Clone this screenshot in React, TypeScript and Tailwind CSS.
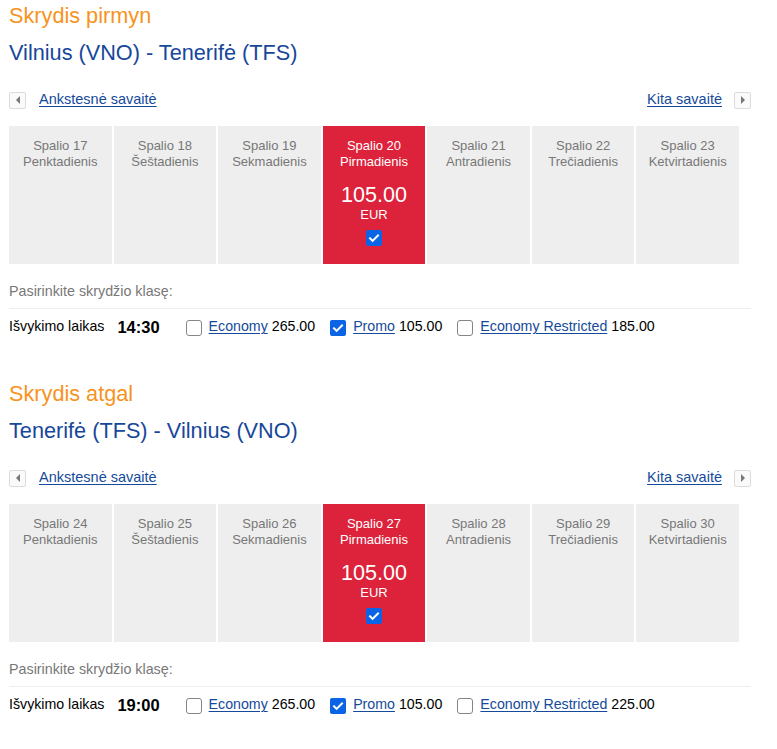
import React from 'react';

type Day = { date: string; name: string; selected?: boolean };

type Fare = { label: string; price: string; checked?: boolean };

type Leg = {
  title: string;
  route: string;
  days: Day[];
  time: string;
  fares: Fare[];
};

const legs: Leg[] = [
  {
    title: 'Skrydis pirmyn',
    route: 'Vilnius (VNO) - Tenerifė (TFS)',
    days: [
      { date: 'Spalio 17', name: 'Penktadienis' },
      { date: 'Spalio 18', name: 'Šeštadienis' },
      { date: 'Spalio 19', name: 'Sekmadienis' },
      { date: 'Spalio 20', name: 'Pirmadienis', selected: true },
      { date: 'Spalio 21', name: 'Antradienis' },
      { date: 'Spalio 22', name: 'Trečiadienis' },
      { date: 'Spalio 23', name: 'Ketvirtadienis' },
    ],
    time: '14:30',
    fares: [
      { label: 'Economy', price: '265.00' },
      { label: 'Promo', price: '105.00', checked: true },
      { label: 'Economy Restricted', price: '185.00' },
    ],
  },
  {
    title: 'Skrydis atgal',
    route: 'Tenerifė (TFS) - Vilnius (VNO)',
    days: [
      { date: 'Spalio 24', name: 'Penktadienis' },
      { date: 'Spalio 25', name: 'Šeštadienis' },
      { date: 'Spalio 26', name: 'Sekmadienis' },
      { date: 'Spalio 27', name: 'Pirmadienis', selected: true },
      { date: 'Spalio 28', name: 'Antradienis' },
      { date: 'Spalio 29', name: 'Trečiadienis' },
      { date: 'Spalio 30', name: 'Ketvirtadienis' },
    ],
    time: '19:00',
    fares: [
      { label: 'Economy', price: '265.00' },
      { label: 'Promo', price: '105.00', checked: true },
      { label: 'Economy Restricted', price: '225.00' },
    ],
  },
];

function Checkbox({ checked }: { checked?: boolean }) {
  if (checked) {
    return (
      <span className="flex h-[16px] w-[16px] shrink-0 items-center justify-center rounded-[2px] bg-[#0b63e5]">
        <svg width="12" height="12" viewBox="0 0 12 12" fill="none">
          <path d="M2 6.3l2.6 2.6L10 3.4" stroke="white" strokeWidth="2" strokeLinecap="square" />
        </svg>
      </span>
    );
  }
  return <span className="block h-[16px] w-[16px] shrink-0 rounded-[3px] border border-[#858585] bg-white" />;
}

function ArrowBox({ dir }: { dir: 'left' | 'right' }) {
  return (
    <span className="flex h-[17px] w-[17px] items-center justify-center rounded-[2px] border border-[#dcdcdc] bg-[#fafafa]">
      <svg width="6" height="8" viewBox="0 0 6 8">
        {dir === 'left' ? <path d="M5 0v8L1 4z" fill="#777" /> : <path d="M1 0v8l4-4z" fill="#777" />}
      </svg>
    </span>
  );
}

function LegSection({ leg, first }: { leg: Leg; first?: boolean }) {
  return (
    <section className={first ? 'pt-[4px]' : 'mt-[43px]'}>
      <h2 className="text-[21.7px] leading-[24px] text-[#f7931d]">{leg.title}</h2>
      <h3 className="mt-[13px] text-[21.7px] leading-[24px] text-[#17479a]">{leg.route}</h3>

      {/* week navigation */}
      <div className="mt-[27px] flex h-[16px] items-center justify-between text-[14.5px] text-[#154a9b]">
        <div className="flex items-center gap-[13px]">
          <ArrowBox dir="left" />
          <a href="#" className="underline underline-offset-[2px]">Ankstesnė savaitė</a>
        </div>
        <div className="flex items-center gap-[12px]">
          <a href="#" className="underline underline-offset-[2px]">Kita savaitė</a>
          <ArrowBox dir="right" />
        </div>
      </div>

      {/* days */}
      <div className="mt-[18px] grid h-[138px] w-[730px] grid-cols-7 gap-[2px]">
        {leg.days.map((d) =>
          d.selected ? (
            <div key={d.date} className="flex flex-col items-center bg-[#dc233b] pt-[12px] text-center text-white">
              <div className="text-[13px] leading-[16px]">{d.date}</div>
              <div className="text-[13px] leading-[16px]">{d.name}</div>
              <div className="mt-[13px] text-[21.5px] leading-[24px]">105.00</div>
              <div className="text-[13px] leading-[16px]">EUR</div>
              <div className="mt-[7px]">
                <Checkbox checked />
              </div>
            </div>
          ) : (
            <div key={d.date} className="bg-[#eeeeee] pt-[12px] text-center text-[#777777]">
              <div className="text-[13px] leading-[16px]">{d.date}</div>
              <div className="text-[13px] leading-[16px]">{d.name}</div>
            </div>
          )
        )}
      </div>

      <p className="mt-[17px] text-[14.3px] leading-[20px] text-[#777777]">Pasirinkite skrydžio klasę:</p>
      <div className="mt-[7px] border-t border-[#eeeeee]" />

      {/* fare row */}
      <div className="mt-[6px] flex h-[24px] items-center text-[14.2px] text-black">
        <span>Išvykimo laikas</span>
        <span className="ml-[13px] text-[16.5px] font-bold">{leg.time}</span>
        <div className="ml-[26px] flex items-center gap-[15px]">
          {leg.fares.map((f) => (
            <label key={f.label} className="flex items-center">
              <span className="mt-[3px]">
                <Checkbox checked={f.checked} />
              </span>
              <a href="#" className="ml-[7px] text-[#154a9b] underline underline-offset-[2px]">
                {f.label}
              </a>
              <span className="ml-[4px]">{f.price}</span>
            </label>
          ))}
        </div>
      </div>
    </section>
  );
}

export default function App() {
  return (
    <div className="min-h-screen bg-white font-['Liberation_Sans',Arial,sans-serif]">
      <div className="w-[751px] pl-[9px]">
        {legs.map((leg, i) => (
          <LegSection key={leg.title} leg={leg} first={i === 0} />
        ))}
      </div>
    </div>
  );
}
